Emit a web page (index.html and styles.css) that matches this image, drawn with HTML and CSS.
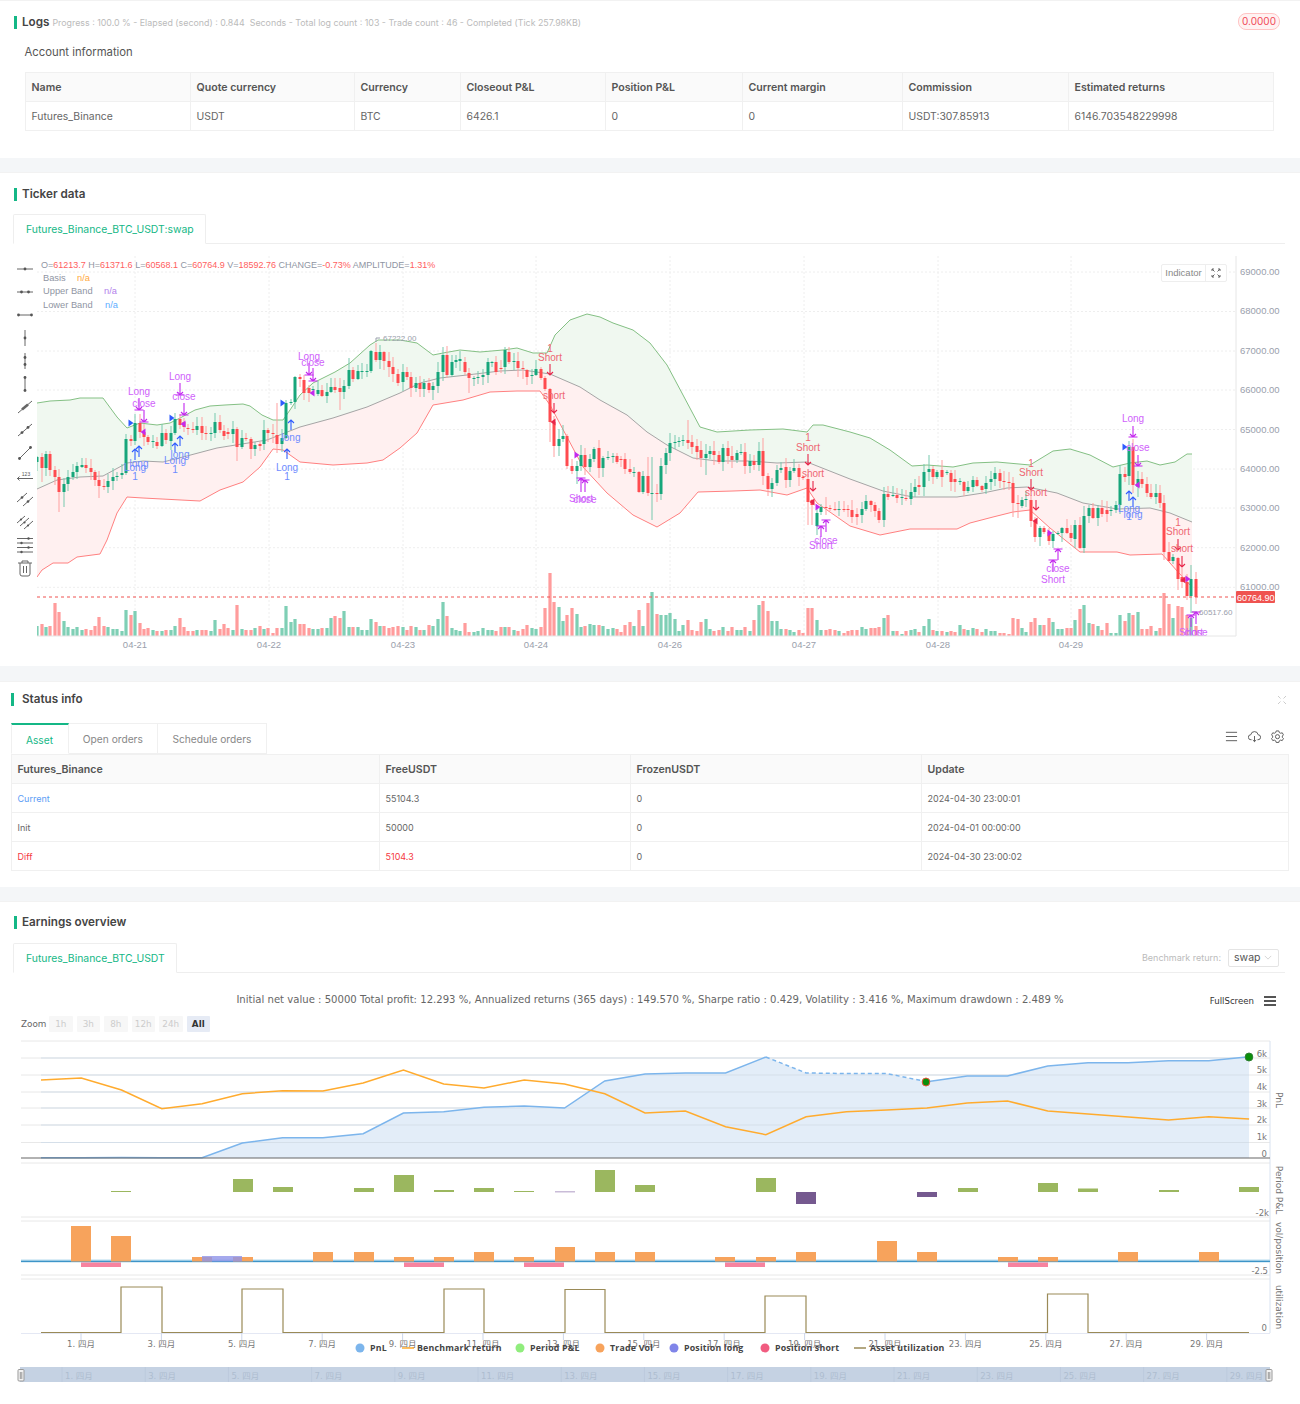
FILE: index.html
```html
<!DOCTYPE html>
<html lang="en">
    <head>
        <meta charset="UTF-8">
        <meta name="viewport" content="width=device-width, initial-scale=1.0">
        <title>Backtest result</title>
        <link rel="stylesheet" href="styles.css">
    </head>
    <body>
        <section class="panel panel-logs">
            <div class="panel-row">
                <h2 class="panel-title">Logs <small class="progress">Progress : 100.0 % - Elapsed (second) : 0.844 &nbsp;Seconds - Total log count : 103 - Trade count : 46 - Completed (Tick 257.98KB)</small></h2>
                <span class="badge">0.0000</span>
            </div>
            <h3 class="account-title">Account information</h3>
            <table class="data-table account-table">
                <colgroup>
                    <col class="a1"><col class="a2"><col class="a3"><col class="a4"><col class="a5"><col class="a6"><col class="a7"><col class="a8">
                </colgroup>
                <thead>
                    <tr><th>Name</th><th>Quote currency</th><th>Currency</th><th>Closeout P&amp;L</th><th>Position P&amp;L</th><th>Current margin</th><th>Commission</th><th>Estimated returns</th></tr>
                </thead>
                <tbody>
                    <tr><td>Futures_Binance</td><td>USDT</td><td>BTC</td><td>6426.1</td><td>0</td><td>0</td><td>USDT:307.85913</td><td>6146.703548229998</td></tr>
                </tbody>
            </table>
        </section>

        <section class="panel panel-ticker">
            <h2 class="panel-title">Ticker data</h2>
            <div class="tabs">
                <a class="tab active">Futures_Binance_BTC_USDT:swap</a>
            </div>
            <div class="kline">
                <div class="tools">
                    <svg class="tool" viewBox="0 0 18 18"><path d="M1 9H17"/><circle cx="9" cy="9" r="1.4"/></svg>
                    <svg class="tool" viewBox="0 0 18 18"><path d="M1 9H17"/><circle cx="5.5" cy="9" r="1.4"/><circle cx="12.5" cy="9" r="1.4"/></svg>
                    <svg class="tool" viewBox="0 0 18 18"><path d="M2 9H16"/><circle cx="2.5" cy="9" r="1.4"/><circle cx="15.5" cy="9" r="1.4"/></svg>
                    <svg class="tool" viewBox="0 0 18 18"><path d="M9 1V17"/><circle cx="9" cy="9" r="1.4"/></svg>
                    <svg class="tool" viewBox="0 0 18 18"><path d="M9 1V17"/><circle cx="9" cy="5.5" r="1.4"/><circle cx="9" cy="12.5" r="1.4"/></svg>
                    <svg class="tool" viewBox="0 0 18 18"><path d="M9 2V16"/><circle cx="9" cy="2.5" r="1.4"/><circle cx="9" cy="15.5" r="1.4"/></svg>
                    <svg class="tool" viewBox="0 0 18 18"><path d="M2 15L16 3"/><path class="thick" d="M6 11.5L12 6.5"/></svg>
                    <svg class="tool" viewBox="0 0 18 18"><path d="M2 15L16 3"/><circle cx="6" cy="11.6" r="1.4"/><circle cx="12" cy="6.4" r="1.4"/></svg>
                    <svg class="tool" viewBox="0 0 18 18"><path d="M3 15L15 3"/><circle cx="3.5" cy="14.5" r="1.4"/><circle cx="14.5" cy="3.5" r="1.4"/></svg>
                    <svg class="tool" viewBox="0 0 18 18"><path d="M1 11.5H17"/><path d="M3.5 9.5L1.5 11.5L3.5 13.5"/><text class="tool-num" x="10" y="8.5">123</text></svg>
                    <svg class="tool" viewBox="0 0 18 18"><path d="M1 12L11 3"/><path d="M7 16L17 7"/><circle cx="6" cy="7.5" r="1.3"/><circle cx="12" cy="11.5" r="1.3"/></svg>
                    <svg class="tool" viewBox="0 0 18 18"><path d="M1 10L9 3"/><path d="M4 13L13 5"/><path d="M8 16L17 8"/><circle cx="5" cy="6.5" r="1.1"/><circle cx="8.5" cy="9.5" r="1.1"/><circle cx="12" cy="12.5" r="1.1"/></svg>
                    <svg class="tool" viewBox="0 0 18 18"><path d="M1 2.5H17M1 7H17M1 11.5H17M1 16H17"/><circle cx="12.5" cy="2.5" r="1.2"/><circle cx="5.5" cy="7" r="1.2"/><circle cx="12.5" cy="11.5" r="1.2"/><circle cx="5.5" cy="16" r="1.2"/></svg>
                    <svg class="tool" viewBox="0 0 18 18"><path d="M2 4H16M6 4V2H12V4M4 4V15A2 2 0 0 0 6 17H12A2 2 0 0 0 14 15V4M7.5 7V14M10.5 7V14"/></svg>
                </div>
                <div class="kline-plot">
                    <svg id="kline-chart" class="chart-svg" viewBox="37 250 1263 410" width="1263" height="410"></svg>
                    <div class="indicator-btn">
                        <span class="indicator-label">Indicator</span>
                        <svg class="indicator-icon" viewBox="0 0 10 10"><path d="M1 1L3.5 3.5M9 1L6.5 3.5M1 9L3.5 6.5M9 9L6.5 6.5M1 1V3M1 1H3M9 1V3M9 1H7M1 9V7M1 9H3M9 9V7M9 9H7"/></svg>
                    </div>
                </div>
            </div>
        </section>

        <section class="panel panel-status">
            <div class="panel-row">
                <h2 class="panel-title">Status info</h2>
                <svg class="expand-icon" viewBox="0 0 10 10"><path d="M1 1L3.5 3.5M9 1L6.5 3.5M1 9L3.5 6.5M9 9L6.5 6.5"/></svg>
            </div>
            <div class="status-bar">
                <div class="status-tabs">
                    <a class="status-tab active">Asset</a>
                    <a class="status-tab">Open orders</a>
                    <a class="status-tab">Schedule orders</a>
                </div>
                <div class="status-icons">
                    <svg class="status-icon" viewBox="0 0 14 14"><path d="M1 2.5H13M1 7H13M1 11.5H13"/></svg>
                    <svg class="status-icon" viewBox="0 0 14 14"><path d="M3.8 10.5H3.2A2.7 2.7 0 0 1 3 5.1A4 4 0 0 1 10.9 5.1A2.7 2.7 0 0 1 10.8 10.5H10.2M7 6.5V12.5M5.2 10.8L7 12.5L8.8 10.8"/></svg>
                    <svg class="status-icon" viewBox="0 0 14 14"><path d="M5.6 1H8.4L8.9 2.7L10.4 3.5L12.1 3L13.4 5.2L12.2 6.5V7.9L13.4 9.2L12.1 11.4L10.4 10.9L8.9 11.7L8.4 13.4H5.6L5.1 11.7L3.6 10.9L1.9 11.4L0.6 9.2L1.8 7.9V6.5L0.6 5.2L1.9 3L3.6 3.5L5.1 2.7Z"/><circle class="hollow" cx="7" cy="7.2" r="2.2"/></svg>
                </div>
            </div>
            <table class="data-table status-table">
                <colgroup>
                    <col class="s1"><col class="s2"><col class="s3"><col class="s4">
                </colgroup>
                <thead>
                    <tr><th>Futures_Binance</th><th>FreeUSDT</th><th>FrozenUSDT</th><th>Update</th></tr>
                </thead>
                <tbody>
                    <tr><td class="text-blue">Current</td><td>55104.3</td><td>0</td><td>2024-04-30 23:00:01</td></tr>
                    <tr><td>Init</td><td>50000</td><td>0</td><td>2024-04-01 00:00:00</td></tr>
                    <tr><td class="text-red">Diff</td><td class="text-red">5104.3</td><td>0</td><td>2024-04-30 23:00:02</td></tr>
                </tbody>
            </table>
        </section>

        <section class="panel panel-earnings">
            <h2 class="panel-title">Earnings overview</h2>
            <div class="tabs">
                <a class="tab active">Futures_Binance_BTC_USDT</a>
                <div class="benchmark">
                    <span class="benchmark-label">Benchmark return:</span>
                    <span class="benchmark-select">swap
                        <svg class="chevron" viewBox="0 0 10 6"><path d="M1 1L5 5L9 1"/></svg>
                    </span>
                </div>
            </div>
            <div class="summary-row">
                <p class="summary">Initial net value : 50000 Total profit: 12.293 %, Annualized returns (365 days) : 149.570 %, Sharpe ratio : 0.429, Volatility : 3.416 %, Maximum drawdown : 2.489 %</p>
                <div class="fullscreen">
                    <span>FullScreen</span>
                    <svg class="menu-icon" viewBox="0 0 12 10"><path d="M0 1H12M0 5H12M0 9H12"/></svg>
                </div>
            </div>
            <div class="zoom-row">
                <span class="zoom-label">Zoom</span>
                <button class="zoom-btn">1h</button>
                <button class="zoom-btn">3h</button>
                <button class="zoom-btn">8h</button>
                <button class="zoom-btn">12h</button>
                <button class="zoom-btn">24h</button>
                <button class="zoom-btn selected">All</button>
            </div>
            <svg id="earnings-chart" class="chart-svg" viewBox="0 1036 1300 350" width="1300" height="350"></svg>
        </section>

        <script src="chart.js"></script>
    </body>
</html>
```

FILE: styles.css
```css
* {
    box-sizing: border-box;
}

html, body {
    margin: 0;
    padding: 0;
}

body {
    background: #f4f6f8;
    font-family: Inter, "Noto Sans CJK SC", sans-serif;
    font-size: 10.4px;
    color: #666;
    width: 1300px;
    height: 1404px;
    overflow: hidden;
}

.panel {
    background: #fff;
    border-top: 1px solid #f2f2f2;
    margin-bottom: 14px;
}

.panel-logs { height: 158px; }
.panel-ticker { height: 494px; margin-bottom: 15px; }
.panel-status { height: 206px; }
.panel-earnings { height: 503px; margin-bottom: 0; }

.panel-row {
    display: flex;
    align-items: center;
    justify-content: space-between;
}

.panel-title {
    margin: 14px 0 0 13.5px;
    padding-left: 5.5px;
    border-left: 3px solid #14b786;
    font-size: 11.7px;
    font-weight: 600;
    line-height: 13px;
    color: #444;
}

.panel-ticker .panel-title {
    margin-top: 15px;
}

.panel-ticker .tabs {
    margin-top: 13px;
}

.panel-status .panel-title {
    margin-top: 11px;
    margin-left: 10.5px;
    padding-left: 8.5px;
}

.progress {
    font-size: 8.85px;
    font-weight: 400;
    color: #bbb;
}

.badge {
    margin: 12px 20px 0 0;
    width: 42px;
    height: 17px;
    line-height: 15px;
    text-align: center;
    font-size: 10px;
    color: #f04a57;
    background: #fff2f2;
    border: 1px solid #ffc4c4;
    border-radius: 8px;
}

.account-title {
    margin: 14px 0 0 24.5px;
    font-size: 11.3px;
    font-weight: 400;
    line-height: 16px;
    color: #555;
}

.data-table {
    border-collapse: collapse;
    table-layout: fixed;
}

.data-table th,
.data-table td {
    border: 1px solid #f0f0f0;
    text-align: left;
    padding: 0 6px;
    height: 29px;
    white-space: nowrap;
    overflow: hidden;
}

.data-table th {
    background: #fafafa;
    font-size: 10.6px;
    font-weight: 600;
    color: #555;
}

.account-table {
    width: 1248px;
    margin: 12px 0 0 24.5px;
}

.a1 { width: 165px; }
.a2 { width: 164px; }
.a3 { width: 106px; }
.a4 { width: 145px; }
.a5 { width: 137px; }
.a6 { width: 160px; }
.a7 { width: 166px; }
.a8 { width: 205px; }

.tabs {
    display: flex;
    align-items: center;
    margin: 14px 15px 0 13px;
    border-bottom: 1px solid #eee;
    height: 30px;
}

.tab {
    height: 30px;
    line-height: 29px;
    padding: 0 11px 0 12px;
    border: 1px solid #eee;
    border-bottom-color: #fff;
    border-radius: 2px 2px 0 0;
    color: #14b786;
}

.kline {
    display: flex;
    margin-top: 6px;
    height: 410px;
}

.tools {
    width: 37px;
    padding: 10px 0 0 16px;
    display: flex;
    flex-direction: column;
    gap: 5px;
}

.tool {
    width: 18px;
    height: 18px;
    flex: none;
    fill: none;
    stroke: #666;
    stroke-width: 1;
}

.tool circle {
    fill: #555;
    stroke: none;
}

.tool .thick {
    stroke-width: 2.6;
}

.tool-num {
    font: 5px "Liberation Sans", sans-serif;
    fill: #555;
    stroke: none;
    text-anchor: middle;
}

.kline-plot {
    position: relative;
    width: 1263px;
}

.chart-svg {
    display: block;
}

.indicator-btn {
    position: absolute;
    top: 14px;
    left: 1124px;
    width: 66px;
    height: 18px;
    display: flex;
    align-items: center;
    background: #fff;
    border: 1px solid #eee;
    border-radius: 2px;
}

.indicator-label {
    flex: 1;
    text-align: center;
    font: 9.5px "Liberation Sans", sans-serif;
    color: #888;
    border-right: 1px solid #eee;
    line-height: 16px;
}

.indicator-icon {
    width: 10px;
    height: 10px;
    margin: 0 5px;
    fill: none;
    stroke: #666;
    stroke-width: 1;
}

.expand-icon {
    width: 10px;
    height: 10px;
    margin: 11px 13px 0 0;
    fill: none;
    stroke: #ccc;
    stroke-width: 1;
}

.status-bar {
    display: flex;
    justify-content: space-between;
    align-items: center;
    margin: 17px 16px 0 10.5px;
    height: 31px;
}

.status-tabs {
    display: flex;
    height: 31px;
    font-size: 10.2px;
}

.status-tab {
    height: 31px;
    line-height: 31px;
    padding: 0 14.3px;
    border: 1px solid #f0f0f0;
    border-left: none;
    color: #888;
}

.status-tab.active {
    width: 58px;
    padding: 0;
    text-align: center;
    border-left: 1px solid #f0f0f0;
    border-top: 2px solid #14b786;
    border-bottom-color: #fff;
    color: #14b786;
}

.status-icons {
    display: flex;
    gap: 10px;
    margin-bottom: 4px;
}

.status-icon {
    width: 13px;
    height: 13px;
    fill: none;
    stroke: #555;
    stroke-width: 1;
}

.status-icon .hollow {
    fill: #fff;
}

.status-table {
    width: 1277px;
    margin-left: 10.5px;
}

.s1 { width: 368px; }
.s2 { width: 251px; }
.s3 { width: 291px; }
.s4 { width: 367px; }

.status-table td {
    font-size: 9px;
}

.text-blue { color: #5b9df5; }
.text-red { color: #f5383f; }

.benchmark {
    margin-left: auto;
    display: flex;
    align-items: center;
    gap: 7px;
    margin-right: 6px;
}

.benchmark-label {
    font-size: 9px;
    color: #bbb;
}

.benchmark-select {
    display: flex;
    align-items: center;
    justify-content: space-between;
    width: 51px;
    height: 18px;
    padding: 0 6px 0 5px;
    border: 1px solid #e4e4e4;
    border-radius: 2px;
    font-size: 10.5px;
    color: #555;
}

.chevron {
    width: 8px;
    height: 5px;
    fill: none;
    stroke: #ccc;
}

.summary-row {
    position: relative;
    margin-top: 20px;
    height: 14px;
}

.summary {
    margin: 0;
    text-align: center;
    font: 10.1px/14px "DejaVu Sans", sans-serif;
    color: #666;
}

.fullscreen {
    position: absolute;
    top: 1px;
    right: 24px;
    display: flex;
    align-items: center;
    gap: 10px;
    font: 8.6px/14px "DejaVu Sans", sans-serif;
    color: #333;
}

.menu-icon {
    width: 12px;
    height: 10px;
    fill: none;
    stroke: #555;
    stroke-width: 1.8;
}

.zoom-row {
    display: flex;
    align-items: center;
    gap: 4px;
    margin: 9px 0 4px 21px;
    height: 16px;
}

.zoom-label {
    width: 24px;
    font: 8.8px "DejaVu Sans", sans-serif;
    color: #666;
}

.zoom-btn {
    width: 23.5px;
    height: 16px;
    padding: 0;
    border: none;
    border-radius: 1px;
    background: #f7f7f7;
    font: 8.8px "DejaVu Sans", sans-serif;
    color: #ccc;
}

.zoom-btn.selected {
    background: #e6ebf5;
    font-weight: 700;
    color: #333;
}

/* kline chart text */
.k-axis { font: 9.5px "Liberation Sans", sans-serif; fill: #9aa0ac; }
.k-grid { stroke: #eee; stroke-width: 1; stroke-dasharray: 2 2; }
.k-border { stroke: #e6e6e6; stroke-width: 1; }
.k-legend { font: 9.3px "Liberation Sans", sans-serif; fill: #8f95a3; }
.k-ohlc { font-size: 9px; }
.k-red { fill: #ff6060; }
.k-orange { fill: #ffa940; }
.k-purple { fill: #b37feb; }
.k-blue { fill: #5cadff; }
.k-tag { font: 9px "Liberation Sans", sans-serif; fill: #fff; }
.k-small { font: 8px "Liberation Sans", sans-serif; fill: #9aa0ac; }
.mark-text { font: 10px "Liberation Sans", sans-serif; text-anchor: middle; dominant-baseline: central; }
.mark-blue { fill: #6f8cff; }
.mark-purple { fill: #cf62fb; }
.mark-red { fill: #ee6672; }
.arrow { fill: none; stroke-width: 1.1; }
.arrow-blue { stroke: #2f5cff; }
.arrow-purple { stroke: #c428ee; }
.arrow-red { stroke: #e8264a; }

/* earnings chart text */
.hc-axis { font: 8.5px "DejaVu Sans", "Noto Sans CJK SC", sans-serif; fill: #777; }
.hc-grid { stroke: #e8e8e8; stroke-width: 1; }
.hc-title { font: 9px "DejaVu Sans", sans-serif; fill: #777; text-anchor: middle; }
.hc-legend { font: 700 8.8px "Open Sans", sans-serif; letter-spacing: 0.2px; fill: #444; }
.hc-nav { font: 8.5px "DejaVu Sans", "Noto Sans CJK SC", sans-serif; fill: #aebdd0; }
```

FILE: chart.js
```js
// candles: x, colour, body top, body bottom, volume height (all in page pixels)
const candles = `37g457,462,10 42r457,468,12 46g454,468,9 50r454,470,10 55r470,477,33 59r477,492,24 64g484,492,15 68g477,484,9 73g472,477,7 77g466,472,9 82g465,467,6 86r465,468,7 91r468,472,6 95r472,480,10 99r480,486,19 104r486,487,10 108g481,487,9 113g477,481,7 117g476,477,7 122g473,475,5 126g439,473,26 131r439,441,21 135g423,441,25 140r423,432,13 144r432,437,7 148r437,442,8 153g441,442,6 157r442,446,5 162g433,446,5 166r433,440,6 171g433,441,6 175g419,433,10 180r419,425,18 184r422,427,9 188r428,429,5 193r429,430,5 197g426,430,6 202r426,433,6 206r433,434,6 211g433,434,5 215g422,433,16 220r422,430,7 224r431,436,12 228r432,434,8 233g429,434,6 237r429,447,31 242g438,447,7 246r438,439,6 251r439,449,6 255g445,449,8 260r444,446,10 264g430,444,7 268r430,433,8 273r433,434,3 277r435,444,8 282g438,444,8 286g403,438,30 291g402,403,14 295g377,402,17 300r377,379,12 304r380,393,12 309r388,393,8 313g389,390,7 318g390,394,7 322r390,396,8 327g392,396,8 331g387,392,18 335r387,390,20 340r388,392,18 344g386,392,25 349g370,386,9 353r370,379,9 358g371,379,9 362g371,372,6 367g371,372,6 371g351,371,17 376r352,360,14 380g352,360,10 384r352,361,10 389r361,367,8 393r367,374,9 398r374,383,10 403g372,382,9 407r372,377,6 411r377,388,10 416g383,388,9 420r383,389,6 424g383,389,6 429r383,390,11 433g386,390,10 438g372,386,17 443g355,372,34 447r355,375,20 452g362,375,8 456g360,362,6 460g359,361,5 465r362,372,13 469r373,378,4 474g378,379,4 478g377,378,5 483g375,377,8 488g362,375,6 492g362,363,6 496r362,372,5 501r368,369,9 505g350,367,9 509r352,362,9 514g361,362,6 518r361,368,5 523r368,369,7 527r370,377,11 532g375,376,8 536g369,375,7 541r369,378,9 545r378,389,28 550r389,422,63 554r422,446,34 559g439,446,29 563g436,439,15 567r436,466,21 572r466,471,28 577g466,471,22 581g455,466,9 585r455,467,10 590g459,467,12 594g449,459,11 599r448,468,11 603g458,468,10 608g457,458,7 613g456,457,8 617r456,462,7 621r459,460,4 625r459,469,11 630r469,472,14 634g472,473,10 639r472,492,26 643g476,492,10 648r476,493,33 652g493,494,44 657r493,494,22 661g466,494,21 666g453,465,21 670g443,453,23 675g442,443,17 679g441,442,5 683g440,441,11 688r440,443,16 692r442,447,6 697r446,452,5 701r450,458,14 706g454,458,17 710g451,454,7 714r451,455,5 719r455,462,6 723g448,462,9 728r448,456,5 732r456,460,9 737g453,460,6 741g452,453,6 745r452,466,9 750g461,466,5 754r461,465,16 759g451,465,31 763r451,476,35 768r476,489,25 772g483,489,15 777g470,483,15 781g468,470,7 786r467,480,7 790g471,480,6 794g468,471,4 799r468,477,6 803r477,478,3 808r479,502,28 812r500,505,28 817g513,526,16 821g507,512,6 826r507,508,6 830r508,509,7 835r509,510,6 839g509,510,5 844r509,510,3 848r509,510,5 852r510,517,6 857r514,517,6 862g509,515,9 866g501,509,7 871r501,505,8 875r505,511,8 879r511,520,9 884g494,520,18 888r494,497,21 893g495,496,5 897r495,498,5 902g497,498,2 906r498,499,5 911g492,499,6 915g487,492,7 919r485,487,4 924g472,487,10 929g469,472,17 933r469,477,6 937g472,477,5 942r470,477,5 947g472,473,4 951r473,482,5 955r479,482,4 960g481,482,11 964r482,491,7 968g487,491,6 973g480,487,8 977r480,486,7 982r486,490,4 986g483,489,7 991g479,482,5 995g473,479,5 1000r473,481,3 1004r481,482,3 1009r482,483,2 1013r483,503,18 1018r503,504,17 1022g500,506,8 1026g499,500,4 1031r500,521,14 1035r521,537,18 1040g528,537,11 1044r528,532,11 1049r532,541,18 1053g534,541,14 1058g533,534,7 1062g528,533,7 1067r528,533,8 1071r533,538,8 1075g525,539,16 1080r525,548,27 1084g516,548,31 1089g508,516,13 1093r508,518,12 1098g508,518,10 1102r508,514,6 1107r510,514,13 1111g510,511,3 1116g505,510,3 1120g474,505,21 1125r474,477,15 1129g447,476,23 1133r447,485,21 1138g479,487,24 1142r479,484,7 1147r484,493,7 1151r493,497,10 1156g493,497,5 1160r493,503,8 1164r503,552,43 1169r552,561,32 1173g557,561,18 1178r558,579,30 1182r577,582,29 1187r582,596,21 1191g579,596,18 1196r579,597,10`;

// wicks that stand out, [top, bottom]
const wicks = {
    42: [0, 482], 50: [451, 0], 59: [0, 512], 64: [0, 507], 99: [0, 498], 104: [0, 490],
    126: [434, 0], 135: [414, 0], 237: [0, 461], 264: [420, 0], 277: [403, 0], 340: [0, 410],
    349: [358, 0], 428: [0, 398], 443: [347, 0], 469: [0, 393], 550: [0, 442], 554: [0, 457],
    559: [0, 456], 563: [425, 0], 577: [0, 484], 648: [457, 0], 652: [457, 520], 661: [0, 500],
    674: [430, 0], 688: [420, 0], 706: [0, 475], 763: [438, 0], 772: [0, 497], 808: [0, 525],
    812: [0, 525], 929: [455, 0], 1013: [0, 517], 1018: [0, 518], 1040: [0, 546], 1084: [0, 553],
    1129: [441, 0], 1169: [542, 0], 1178: [0, 590], 1182: [568, 0], 1187: [0, 600],
    1191: [565, 613], 1196: [572, 604]
};

const upper = [[37,403],[50,401],[70,400],[80,398],[103,398],[117,417],[127,428],[140,423],[157,425],[170,423],[180,418],[195,410],[210,406],[225,405],[243,404],[250,406],[262,415],[273,420],[283,420],[290,410],[300,395],[313,383],[335,372],[350,363],[370,345],[378,340],[400,340],[417,343],[433,355],[443,353],[460,350],[480,352],[503,350],[517,348],[533,353],[547,353],[555,335],[570,320],[587,314],[600,317],[613,323],[633,330],[650,343],[667,365],[683,395],[700,427],[717,432],[750,430],[783,429],[807,432],[813,425],[823,425],[850,432],[870,438],[890,450],[912,466],[927,465],[953,467],[973,463],[997,462],[1030,465],[1053,451],[1070,449],[1090,455],[1113,467],[1130,463],[1147,461],[1160,465],[1175,462],[1187,454],[1192,454]];
const basis = [[37,489],[57,480],[80,477],[103,476],[127,463],[143,461],[163,462],[183,457],[217,448],[267,440],[300,427],[333,418],[367,407],[400,393],[420,383],[440,378],[467,375],[500,371],[523,370],[550,374],[580,387],[600,400],[627,415],[647,432],[667,445],[693,458],[717,461],[750,461],[777,463],[807,462],[850,479],[883,491],[913,497],[957,497],[983,493],[1007,488],[1027,487],[1057,493],[1083,503],[1117,509],[1150,508],[1170,513],[1192,522]];
const lower = [[37,577],[42,570],[53,563],[68,563],[77,557],[100,554],[107,540],[117,513],[127,497],[143,498],[200,501],[220,490],[243,482],[260,467],[273,449],[283,450],[300,462],[333,465],[367,463],[383,460],[400,448],[417,433],[433,405],[463,400],[490,392],[517,391],[540,391],[550,405],[567,437],[583,467],[607,493],[633,515],[657,527],[680,513],[698,492],[733,491],[760,490],[787,495],[807,488],[817,503],[850,526],[880,535],[910,529],[957,529],[970,523],[993,517],[1013,512],[1030,510],[1050,528],[1080,552],[1117,552],[1130,555],[1162,554],[1178,572],[1192,587]];

// text marks: x, centre y, text, colour
const markTexts = [
    [139,391,'Long','purple'],[144,403,'close','purple'],[135,467,'Long','blue'],[139,463,'long','blue'],[135,476,'1','blue'],
    [180,376,'Long','purple'],[184,396,'close','purple'],[180,454,'long','blue'],[175,460,'Long','blue'],[175,469,'1','blue'],
    [291,437,'long','blue'],[287,467,'Long','blue'],[287,476,'1','blue'],[309,356,'Long','purple'],[313,362,'close','purple'],
    [550,348,'1','red'],[550,357,'Short','red'],[554,395,'short','red'],[581,498,'Short','purple'],[585,499,'close','purple'],
    [808,437,'1','red'],[808,447,'Short','red'],[813,473,'short','red'],[826,540,'close','purple'],[821,545,'Short','purple'],
    [1031,463,'1','red'],[1031,472,'Short','red'],[1036,492,'short','red'],[1058,568,'close','purple'],[1053,579,'Short','purple'],
    [1133,418,'Long','purple'],[1138,447,'close','purple'],[1129,508,'Long','blue'],[1133,514,'long','blue'],[1129,516,'1','blue'],
    [1178,522,'1','red'],[1178,531,'Short','red'],[1182,548,'short','red'],[1191,632,'Short','purple'],[1196,632,'close','purple']
];

// arrows: x, tail y, tip y, colour, bar at the tip
const markArrows = [
    [135,460,449,'blue'],[139,457,446,'blue'],[139,398,410,'purple',1],[144,410,422,'purple',1],
    [175,452,443,'blue'],[180,446,436,'blue'],[180,383,395,'purple',1],[184,403,415,'purple',1],
    [291,430,420,'blue'],[287,459,449,'blue'],[309,363,375,'purple',1],[313,368,381,'purple',1],
    [550,364,375,'red'],[554,403,413,'red'],[581,492,478,'purple',1],[585,492,480,'purple',1],
    [808,454,465,'red'],[813,481,491,'red'],[821,537,526,'purple',1],[826,532,520,'purple',1],
    [1031,479,490,'red'],[1036,500,510,'red'],[1058,560,549,'purple',1],[1053,572,560,'purple',1],
    [1133,426,437,'purple',1],[1138,455,466,'purple',1],[1129,501,491,'blue'],[1133,507,497,'blue'],
    [1178,539,550,'red'],[1182,556,567,'red'],[1191,627,615,'purple',1],[1196,624,612,'purple',1]
];

// triangles: x, y, direction, colour
const markTriangles = [
    [131,423,1,'#2f5cff'],[143,432,-1,'#c428ee'],[172,418,1,'#2f5cff'],[183,424,-1,'#c428ee'],[283,403,1,'#2f5cff'],[312,393,-1,'#c428ee'],
    [553,422,-1,'#e8264a'],[577,455,1,'#c428ee'],[812,502,-1,'#e8264a'],[818,507,1,'#c428ee'],
    [1035,521,-1,'#e8264a'],[1050,533,1,'#c428ee'],[1125,447,1,'#2f5cff'],[1137,485,-1,'#c428ee'],[1183,580,-1,'#e8264a'],[1188,579,1,'#c428ee']
];

function line(points) {
    return points.map(function(p) { return p[0] + ',' + p[1]; }).join(' ');
}

function drawKline() {
    const out = [];
    let seed = 7;
    const rand = function() {
        seed = (seed * 16807) % 2147483647;
        return seed / 2147483647;
    };

    // grid
    [272,311.5,351,390,429.5,469,508,547.7,587.3].forEach(function(y) {
        out.push(`<line class="k-grid" x1="37" x2="1236" y1="${y}" y2="${y}"/>`);
    });
    const days = [[135,'04-21'],[269,'04-22'],[403,'04-23'],[536,'04-24'],[670,'04-26'],[804,'04-27'],[938,'04-28'],[1071,'04-29']];
    days.forEach(function(d) {
        out.push(`<line class="k-grid" x1="${d[0]}" x2="${d[0]}" y1="256" y2="636"/>`);
    });

    // bands
    out.push(`<polygon fill="#f0f8f0" points="${line(upper)} ${line(basis.slice().reverse())}"/>`);
    out.push(`<polygon fill="#fff0f0" points="${line(basis)} ${line(lower.slice().reverse())}"/>`);
    out.push(`<polyline fill="none" stroke="#84c084" points="${line(upper)}"/>`);
    out.push(`<polyline fill="none" stroke="#a5a5a5" points="${line(basis)}"/>`);
    out.push(`<polyline fill="none" stroke="#ff8080" points="${line(lower)}"/>`);

    // candles and volume
    candles.split(' ').forEach(function(token) {
        const m = token.match(/(\d+)([gr])(\d+),(\d+),(\d+)/);
        const x = +m[1], top = +m[3], bottom = +m[4], vol = +m[5];
        const body = m[2] == 'g' ? '#17a67b' : '#ff4b4f';
        const wickColor = m[2] == 'g' ? '#76c9ae' : '#ffa0a0';
        const w = wicks[x] || [0, 0];
        const high = w[0] || Math.round(top - 1 - rand() * 9);
        const low = w[1] || Math.round(bottom + 1 + rand() * 9);
        out.push(`<line stroke="${wickColor}" x1="${x}" x2="${x}" y1="${high}" y2="${low}"/>`);
        out.push(`<rect fill="${body}" x="${x - 1.5}" y="${top}" width="3" height="${Math.max(bottom - top, 1)}"/>`);
        const volColor = m[2] == 'g' ? '#7fcfb5' : '#ff9c9c';
        out.push(`<rect fill="${volColor}" x="${x - 1.6}" y="${636 - vol}" width="3.2" height="${vol}"/>`);
    });

    // high and low labels
    out.push('<path fill="none" stroke="#9aa0ac" d="M376 342V338H380"/>');
    out.push('<text class="k-small" x="383" y="341">67222.00</text>');
    out.push('<path fill="none" stroke="#9aa0ac" d="M1192 612H1197"/>');
    out.push('<text class="k-small" x="1199" y="615">60517.60</text>');

    // last price
    out.push('<line stroke="#ef5350" stroke-dasharray="3 3" x1="37" x2="1236" y1="597" y2="597"/>');

    // trade marks
    markTriangles.forEach(function(t) {
        const d = t[2] * 2.5;
        out.push(`<polygon fill="${t[3]}" points="${t[0] - d},${t[1] - 3.5} ${t[0] - d},${t[1] + 3.5} ${t[0] + d},${t[1]}"/>`);
    });
    markArrows.forEach(function(a) {
        const dir = a[2] > a[1] ? 1 : -1;
        let d = `M${a[0]} ${a[1]}V${a[2]}M${a[0] - 3} ${a[2] - dir * 3}L${a[0]} ${a[2]}L${a[0] + 3} ${a[2] - dir * 3}`;
        if (a[4]) {
            d += `M${a[0] - 4.5} ${a[2]}H${a[0] + 4.5}`;
        }
        out.push(`<path class="arrow arrow-${a[3]}" d="${d}"/>`);
    });
    markTexts.forEach(function(t) {
        out.push(`<text class="mark-text mark-${t[3]}" x="${t[0]}" y="${t[1]}">${t[2]}</text>`);
    });

    // borders and axes
    out.push('<line class="k-border" x1="36.5" x2="36.5" y1="250" y2="655"/>');
    out.push('<line class="k-border" x1="1236" x2="1236" y1="256" y2="636"/>');
    out.push('<line class="k-border" x1="37" x2="1236" y1="636" y2="636"/>');
    ['69000','68000','67000','66000','65000','64000','63000','62000','61000'].forEach(function(p, i) {
        out.push(`<text class="k-axis" x="1240" y="${275 + i * 39.4}">${p}.00</text>`);
    });
    days.forEach(function(d) {
        out.push(`<text class="k-axis" text-anchor="middle" x="${d[0]}" y="648">${d[1]}</text>`);
    });
    out.push('<rect fill="#ef5350" rx="1" x="1236" y="591" width="39" height="12"/>');
    out.push('<text class="k-tag" x="1237" y="600.5">60764.90</text>');

    // legend
    out.push(`<text class="k-legend k-ohlc" x="41" y="267.5">O=<tspan class="k-red">61213.7</tspan> H=<tspan class="k-red">61371.6</tspan> L=<tspan class="k-red">60568.1</tspan> C=<tspan class="k-red">60764.9</tspan> V=<tspan class="k-red">18592.76</tspan> CHANGE=<tspan class="k-red">-0.73%</tspan> AMPLITUDE=<tspan class="k-red">1.31%</tspan></text>`);
    out.push('<text class="k-legend" x="43" y="280.5">Basis</text><text class="k-legend k-orange" x="77" y="280.5">n/a</text>');
    out.push('<text class="k-legend" x="43" y="294">Upper Band</text><text class="k-legend k-purple" x="104" y="294">n/a</text>');
    out.push('<text class="k-legend" x="43" y="307.5">Lower Band</text><text class="k-legend k-blue" x="105" y="307.5">n/a</text>');

    document.getElementById('kline-chart').innerHTML = out.join('');
}

const dayX = function(i) { return 41 + i * 40.27; };
const pnl = [1157.7,1157.7,1157.5,1157.7,1157.7,1143,1137.7,1137.7,1133.7,1113,1111.7,1107.3,1106,1108,1081,1074,1073,1073,1057,1073,1073.5,1073.5,1081.7,1076,1076,1066,1062.7,1062.7,1060.7,1060.7,1056.7];
const bench = [1080,1078,1090,1108.7,1103.7,1093.7,1090.7,1091,1083,1070,1084,1088,1080,1084,1093.7,1113,1111,1126.7,1134.7,1116.7,1111.7,1110,1108,1103,1101,1111,1114,1117,1120,1116.7,1119];

// bars: x, top, bottom
const pnlUp = [[111,1191,1192],[233,1179,1192],[273,1187,1192],[354,1188,1192],[394,1175,1192],[434,1190,1192],[474,1188,1192],[514,1191,1192],[595,1170,1192],[635,1185,1192],[756,1178,1192],[958,1188,1192],[1038,1183,1192],[1078,1188.5,1192],[1159,1190,1192],[1239,1187,1192]];
const pnlDown = [[555,1191,1192.5],[796,1192,1204],[917,1192,1197]];
const volUp = [[71,1226],[111,1236],[192,1257],[233,1257],[313,1252],[354,1252],[394,1257],[434,1257],[474,1252],[514,1257],[555,1247],[595,1252],[635,1252],[715,1257],[756,1257],[796,1252],[877,1241],[917,1252],[998,1257],[1038,1257],[1118,1252],[1199,1252]];
const shorts = [81,404,524,725,1008];
const utilHumps = [[121,162,1287],[242,283,1289],[444,484,1289],[565,605,1289.5],[765,806,1296],[1047.5,1088,1294]];

function drawEarnings() {
    const out = [];

    // pane grid
    [1041,1058,1075,1092,1108,1125,1142.5].forEach(function(y) {
        out.push(`<line class="hc-grid" x1="21" x2="1270" y1="${y}" y2="${y}"/>`);
    });
    [1163,1217,1221,1275,1279].forEach(function(y) {
        out.push(`<line class="hc-grid" x1="21" x2="1270" y1="${y}" y2="${y}"/>`);
    });
    out.push('<line stroke="#d8e2f0" x1="1270" x2="1270" y1="1041" y2="1333"/>');

    // pnl area and lines
    const pnlPoints = pnl.map(function(y, i) { return [dayX(i), y]; });
    const benchPoints = bench.map(function(y, i) { return [dayX(i), y]; });
    out.push(`<polygon fill="#e3edf8" points="${dayX(0)},1158 ${line(pnlPoints)} ${dayX(30)},1158"/>`);
    [1058,1075,1092,1108,1125,1142.5].forEach(function(y) {
        out.push(`<line stroke="#d5dfe9" x1="41" x2="1249" y1="${y}" y2="${y}"/>`);
    });
    out.push(`<polyline fill="none" stroke="#7cb5ec" stroke-width="1.5" points="${line(pnlPoints.slice(0, 19))}"/>`);
    out.push(`<polyline fill="none" stroke="#7cb5ec" stroke-width="1.5" stroke-dasharray="4 3" points="${line(pnlPoints.slice(18, 23))}"/>`);
    out.push(`<polyline fill="none" stroke="#7cb5ec" stroke-width="1.5" points="${line(pnlPoints.slice(22))}"/>`);
    out.push(`<polyline fill="none" stroke="#ffab2e" stroke-width="1.5" points="${line(benchPoints)}"/>`);
    out.push('<line stroke="#666" stroke-width="1.2" x1="21" x2="1270" y1="1158" y2="1158"/>');
    out.push('<ellipse fill="#0a8f0a" stroke="#e8543a" cx="926" cy="1082" rx="3.8" ry="4"/>');
    out.push('<ellipse fill="#0a8f0a" stroke="#2e7d32" cx="1249" cy="1057" rx="3.8" ry="4"/>');

    // period p&l
    pnlUp.forEach(function(b) {
        out.push(`<rect fill="#9bb75f" x="${b[0]}" y="${b[1]}" width="20" height="${b[2] - b[1]}"/>`);
    });
    pnlDown.forEach(function(b, i) {
        const color = i == 0 ? '#c9bcd8' : '#75598f';
        out.push(`<rect fill="${color}" x="${b[0]}" y="${b[1]}" width="20" height="${b[2] - b[1]}"/>`);
    });

    // volume and position
    shorts.forEach(function(x) {
        out.push(`<rect fill="#f7839f" x="${x}" y="1261" width="40" height="6"/>`);
    });
    out.push('<line stroke="#b8dcee" stroke-width="3" x1="21" x2="1270" y1="1261" y2="1261"/>');
    out.push('<line stroke="#3d94c8" stroke-width="1.2" x1="21" x2="1270" y1="1261.3" y2="1261.3"/>');
    volUp.forEach(function(b) {
        out.push(`<rect fill="#f7a35c" x="${b[0]}" y="${b[1]}" width="20" height="${1261.5 - b[1]}"/>`);
    });
    out.push('<rect fill="#8f93e8" fill-opacity="0.8" x="202" y="1256" width="40" height="5.5"/>');

    // asset utilization step line
    let step = 'M41 1332.5';
    utilHumps.forEach(function(h) {
        step += `H${h[0]}V${h[2]}H${h[1]}V1332.5`;
    });
    step += 'H1249';
    out.push(`<path fill="none" stroke="#9a8a57" stroke-width="1.2" d="${step}"/>`);
    out.push('<line stroke="#e4e8f4" x1="21" x2="1270" y1="1333.5" y2="1333.5"/>');

    // axis labels
    ['6k','5k','4k','3k','2k','1k','0'].forEach(function(t, i) {
        out.push(`<text class="hc-axis" text-anchor="end" x="1267" y="${1056.5 + i * 16.7}">${t}</text>`);
    });
    out.push('<text class="hc-axis" text-anchor="end" x="1269" y="1216">-2k</text>');
    out.push('<text class="hc-axis" text-anchor="end" x="1268" y="1274">-2.5</text>');
    out.push('<text class="hc-axis" text-anchor="end" x="1267" y="1331">0</text>');
    [['PnL',1100],['Period P&amp;L',1190],['vol/position',1248],['utilization',1307]].forEach(function(t) {
        out.push(`<text class="hc-title" transform="translate(1276 ${t[1]}) rotate(90)">${t[0]}</text>`);
    });

    // date ticks
    for (let d = 1; d <= 29; d += 2) {
        const x = 81 + (d - 1) * 40.2;
        out.push(`<line stroke="#ccd6eb" x1="${x}" x2="${x}" y1="1333" y2="1340"/>`);
        out.push(`<text class="hc-axis" text-anchor="middle" x="${x}" y="1347">${d}. 四月</text>`);
    }

    // legend
    const legend = [
        ['dot','#7cb5ec',360,'PnL',370],['bar','#ffab2e',402,'Benchmark return',417],['dot','#90ed7d',520,'Period P&amp;L',530],
        ['dot','#f7a35c',600,'Trade Vol',610],['dot','#8085e9',674,'Position long',684],['dot','#f15c80',765,'Position short',775],
        ['bar','#9a8a57',854,'Asset utilization',870]
    ];
    legend.forEach(function(l) {
        if (l[0] == 'dot') {
            out.push(`<circle fill="${l[1]}" cx="${l[2]}" cy="1348" r="4.5"/>`);
        } else {
            out.push(`<line stroke="${l[1]}" stroke-width="1.5" x1="${l[2]}" x2="${l[2] + 12}" y1="1348" y2="1348"/>`);
        }
        out.push(`<text class="hc-legend" x="${l[4]}" y="1351">${l[3]}</text>`);
    });

    // navigator
    out.push('<rect fill="#c5d2e3" x="20" y="1367" width="1250" height="15"/>');
    for (let d = 1; d <= 29; d += 2) {
        const x = 65 + (d - 1) * 41.6;
        out.push(`<line stroke="#bccadd" x1="${x - 3}" x2="${x - 3}" y1="1367" y2="1382"/>`);
        out.push(`<text class="hc-nav" x="${x}" y="1379">${d}. 四月</text>`);
    }
    [18,1266].forEach(function(x) {
        out.push(`<rect fill="#f2f2f2" stroke="#999" x="${x}" y="1369.5" width="6" height="11.5" rx="1"/>`);
        out.push(`<path stroke="#999" d="M${x + 2.3} 1372V1379M${x + 3.8} 1372V1379"/>`);
    });

    document.getElementById('earnings-chart').innerHTML = out.join('');
}

drawKline();
drawEarnings();
```
